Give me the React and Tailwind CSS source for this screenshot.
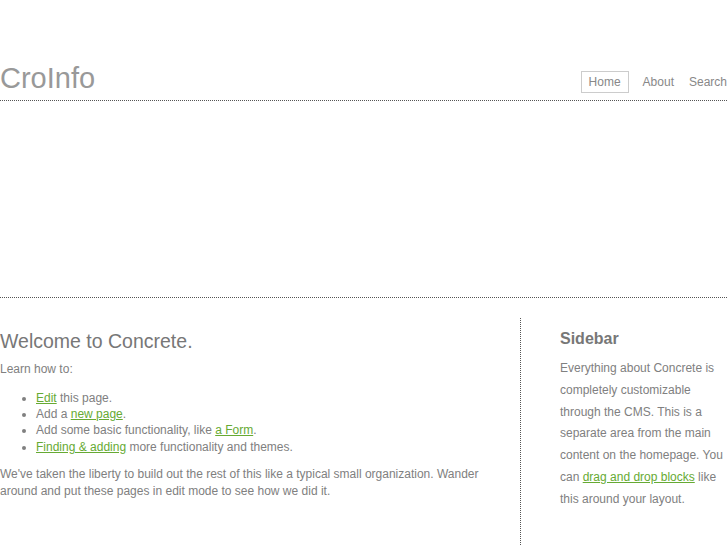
import React from "react";

const links = "text-[#66aa33] underline";

export default function App() {
  return (
    <div className="w-full h-[545px] overflow-hidden bg-white text-[#808080] font-['Liberation_Sans',Arial,sans-serif]">
      {/* header */}
      <header className="h-[101px] flex items-end justify-between border-b border-dotted border-[#555]">
        <h1 className="text-[29px] leading-[32px] text-[#999] mb-[6px]">CroInfo</h1>
        <nav className="flex items-center text-[12px] text-[#888] mb-[7px]">
          <a className="border border-[#ccc] px-[7px] leading-[20px]">Home</a>
          <a className="ml-[14px] leading-[20px]">About</a>
          <a className="ml-[15px] leading-[20px]">Search</a>
        </nav>
      </header>

      {/* banner area */}
      <div className="h-[197px] border-b border-dotted border-[#555]"></div>

      {/* content */}
      <div className="mt-[20px] flex h-[227px]">
        <main className="w-[521px] pr-[21px] pt-[11px] border-r border-dotted border-[#555] text-[12px]">
          <h2 className="text-[19.5px] leading-[24px] text-[#777]">Welcome to Concrete.</h2>
          <p className="mt-[8px] leading-[16.5px]">Learn how to:</p>
          <ul className="mt-[12px] pl-[36px] list-disc leading-[16.4px]">
            <li>
              <a className={links}>Edit</a> this page.
            </li>
            <li>
              Add a <a className={links}>new page</a>.
            </li>
            <li>
              Add some basic functionality, like <a className={links}>a Form</a>.
            </li>
            <li>
              <a className={links}>Finding &amp; adding</a> more functionality and themes.
            </li>
          </ul>
          <p className="mt-[11px] leading-[17px]">
            We've taken the liberty to build out the rest of this like a typical small organization. Wander
            around and put these pages in edit mode to see how we did it.
          </p>
        </main>

        <aside className="flex-1 pl-[39px] pt-[11px]">
          <h3 className="text-[16px] leading-[20px] font-bold text-[#777]">Sidebar</h3>
          <p className="mt-[9px] text-[12px] leading-[21.8px] pr-[4px]">
            Everything about Concrete is completely customizable through the CMS. This is a separate area
            from the main content on the homepage. You can <a className={links}>drag and drop blocks</a> like
            this around your layout.
          </p>
        </aside>
      </div>
    </div>
  );
}
